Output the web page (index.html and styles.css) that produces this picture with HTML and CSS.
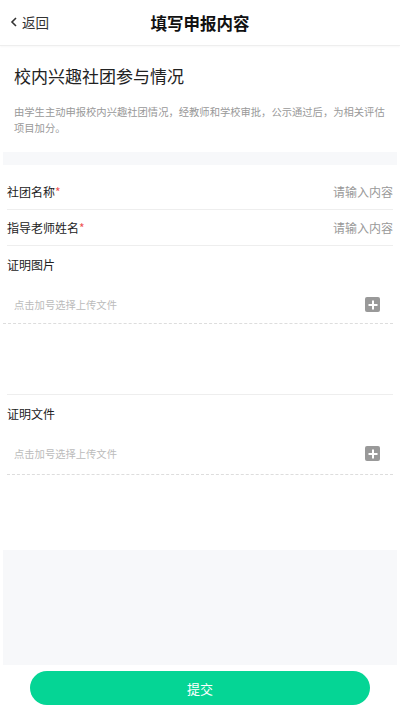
FILE: index.html
```html
<!DOCTYPE html>
<html lang="zh-CN">
<head>
  <meta charset="UTF-8" />
  <meta name="viewport" content="width=device-width, initial-scale=1.0"/>
  <title>填写申报内容</title>
  <link rel="stylesheet" href="styles.css">
</head>
<body>

  <!-- Top Bar -->
  <div class="nav-bar">
    <a class="back" href="#">
      <svg class="back-icon" width="8" height="10" viewBox="0 0 8 10">
        <path d="M6 1 L2 5 L6 9" fill="none" stroke="#333" stroke-width="1.6"/>
      </svg>
      返回
    </a>
    <h1 class="nav-title">填写申报内容</h1>
  </div>

  <!-- Intro -->
  <div class="intro">
    <h2>校内兴趣社团参与情况</h2>
    <p>由学生主动申报校内兴趣社团情况，经教师和学校审批，公示通过后，为相关评估项目加分。</p>
  </div>

  <div class="gap-band"></div>

  <!-- Form -->
  <div class="form">
    <div class="field">
      <label>社团名称<span class="req">*</span></label>
      <input type="text" placeholder="请输入内容">
    </div>
    <div class="field">
      <label>指导老师姓名<span class="req">*</span></label>
      <input type="text" placeholder="请输入内容">
    </div>

    <div class="upload">
      <div class="upload-label">证明图片</div>
      <div class="upload-row">
        <span>点击加号选择上传文件</span>
        <span class="plus"></span>
      </div>
    </div>
    <div class="upload-space"></div>

    <div class="upload top-line">
      <div class="upload-label">证明文件</div>
      <div class="upload-row">
        <span>点击加号选择上传文件</span>
        <span class="plus"></span>
      </div>
    </div>
  </div>

  <div class="bottom-fill"></div>

  <div class="footer">
    <button class="submit">提交</button>
  </div>

</body>
</html>
```

FILE: styles.css
```css
body {
  font-family: "Noto Sans CJK SC", "Noto Sans", sans-serif;
  margin: 0;
  padding: 0;
  width: 400px;
  height: 710px;
  background: #fff;
  color: #333;
  display: flex;
  flex-direction: column;
  overflow: hidden;
}

.nav-bar {
  height: 45px;
  flex-shrink: 0;
  display: flex;
  align-items: center;
  justify-content: center;
  position: relative;
  border-bottom: 1px solid #eee;
  box-shadow: 0 1px 2px rgba(0, 0, 0, 0.03);
}

.back {
  position: absolute;
  left: 10px;
  top: 12px;
  display: flex;
  align-items: center;
  gap: 4px;
  font-size: 13.5px;
  color: #333;
  text-decoration: none;
}

.nav-title {
  margin: 0;
  font-size: 16.5px;
  font-weight: bold;
  color: #111;
}

.intro {
  padding: 17px 14px 16px;
}

.intro h2 {
  margin: 0 0 15px;
  font-size: 17px;
  font-weight: normal;
  color: #222;
  line-height: 26px;
}

.intro p {
  margin: 0;
  font-size: 10.3px;
  line-height: 16px;
  color: #999;
}

.gap-band {
  height: 13px;
  flex-shrink: 0;
  background: #f7f8fa;
  margin: 0 3px;
}

.form {
  padding: 9px 7px 0 3px;
}

.field {
  height: 35px;
  margin-left: 4px;
  display: flex;
  align-items: center;
  justify-content: space-between;
  border-bottom: 1px solid #eee;
}

.field label {
  font-size: 12px;
  color: #222;
}

.req {
  color: #e55;
}

.field input {
  border: none;
  outline: none;
  text-align: right;
  font-family: inherit;
  font-size: 12px;
  width: 120px;
  padding: 0;
  background: transparent;
}

.field input::placeholder {
  color: #999;
}

.upload {
  border-bottom: 1px dashed #ddd;
}

.upload.top-line {
  border-top: 1px solid #eee;
  margin-left: 4px;
}

.upload-label {
  font-size: 12px;
  color: #222;
  line-height: 18px;
  padding: 10px 0 0 4px;
}

.top-line .upload-label {
  padding-left: 0;
}

.upload-row {
  height: 15px;
  margin: 23px 0 11px;
  display: flex;
  align-items: center;
  justify-content: space-between;
  padding: 0 13px 0 11px;
  font-size: 10.3px;
  color: #bbb;
}

.top-line .upload-row {
  padding-left: 7px;
  margin-bottom: 13px;
}

.plus {
  width: 15px;
  height: 15px;
  background: #999;
  border-radius: 2px;
  position: relative;
}

.plus::before,
.plus::after {
  content: "";
  position: absolute;
  background: #fff;
  left: 50%;
  top: 50%;
  transform: translate(-50%, -50%);
}

.plus::before {
  width: 9px;
  height: 2px;
}

.plus::after {
  width: 2px;
  height: 9px;
}

.upload-space {
  height: 70px;
}

.bottom-fill {
  margin: 75px 3px 0;
  flex: 1;
  background: #f7f8fa;
}

.footer {
  height: 45px;
  flex-shrink: 0;
  display: flex;
  align-items: flex-start;
  justify-content: center;
  padding-top: 6px;
  box-sizing: border-box;
}

.submit {
  width: 340px;
  height: 34px;
  border: none;
  border-radius: 17px;
  background: #05d595;
  color: #fff;
  font-family: inherit;
  font-size: 13px;
}
```
